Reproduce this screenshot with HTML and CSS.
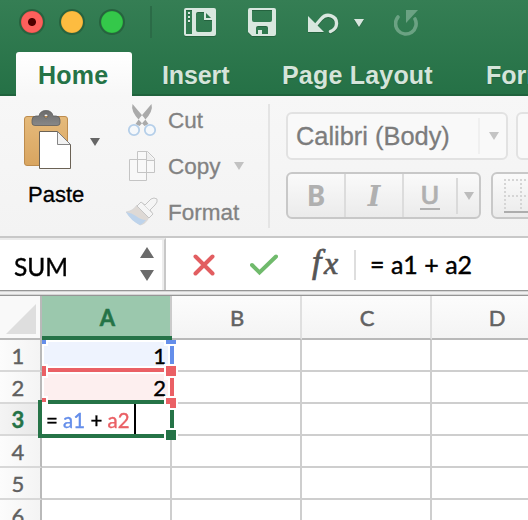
FILE: index.html
```html
<!DOCTYPE html>
<html lang="en">
<head>
<meta charset="utf-8">
<title>Workbook</title>
<link rel="stylesheet" href="styles.css">
</head>
<body>
<div class="app">
  <header class="top">
    <div class="titlebar">
      <i class="light red"></i><i class="light yellow"></i><i class="light green"></i>
      <i class="divider"></i>
      <svg class="tool sidebar" width="34" height="30" viewBox="0 0 34 30"><path fill="#d9e7df" fill-rule="evenodd" d="M3 0H30Q32 0 32 2V26Q32 28 30 28H2Q0 28 0 26V2Q0 0 2 0ZM2 2V26H8V2ZM14 4Q12 4 12 6V22Q12 24 14 24H26Q28 24 28 22V12H20V4Z"/><path fill="#d9e7df" d="M4 4h2v2H4zM4 8h2v2H4zM4 12h2v2H4z"/><path fill="#2f774e" d="M22 5L27 10H22Z"/></svg>
      <svg class="tool save" width="30" height="30" viewBox="0 0 30 30"><path fill="#d9e7df" fill-rule="evenodd" d="M2 0H26Q28 0 28 2V26Q28 28 26 28H4L0 24V2Q0 0 2 0ZM4 2V12Q4 14 6 14H22Q24 14 24 12V2ZM10 18Q8 18 8 20V26H10V22H14V26H20V20Q20 18 18 18Z"/></svg>
      <svg class="tool undo" width="32" height="24" viewBox="0 0 32 24"><path fill="#d9e7df" d="M0 3V19H16Z"/><path d="M7 13L13 6C19 -1 29 3 28.500 11C28.300 15 26 17 22.500 18.500" fill="none" stroke="#d9e7df" stroke-width="3.400" stroke-linecap="round"/></svg>
      <svg class="tool caret" width="10" height="8" viewBox="0 0 10 8"><path fill="#d9e7df" d="M0 0H10L5 8Z"/></svg>
      <svg class="tool redo" width="26" height="28" viewBox="0 0 26 28"><path d="M4 7A10.300 10.300 0 1 0 21 9" fill="none" stroke="#6ba283" stroke-width="3.600" stroke-linecap="round"/><path fill="#6ba283" d="M12 0H24L12 13Z"/></svg>
    </div>
    <nav class="tabs">
      <a class="tab active">Home</a><a class="tab insert">Insert</a><a class="tab layout">Page Layout</a><a class="tab formulas">Formulas</a>
    </nav>
  </header>

  <section class="ribbon">
    <div class="paste">
      <div class="paste-row">
        <svg width="48" height="60" viewBox="0 0 48 60"><defs><linearGradient id="board" x2="0" y2="1"><stop stop-color="#e5ba7b"/><stop offset="1" stop-color="#d9a560"/></linearGradient><linearGradient id="clip" x2="0" y2="1"><stop stop-color="#6b6b6b"/><stop offset="1" stop-color="#888"/></linearGradient></defs><rect x=".5" y="6.500" width="43" height="49" rx="2.500" fill="url(#board)" stroke="#bd8c4e"/><path fill="url(#clip)" stroke="#606060" stroke-width=".8" fill-rule="evenodd" d="M12 6H15Q16 .5 22 .5T29 6H32Q36 6 36 10V13Q36 15.500 33 15.500H11Q8 15.500 8 13V10Q8 6 12 6ZM22 4A2 2 0 1 0 22 8A2 2 0 1 0 22 4Z"/><path fill="#fff" stroke="#6b6255" d="M15.500 21.500H33.500L46.500 34.500V58.500H15.500Z"/><path fill="#f2f2f2" stroke="#777" stroke-width=".9" d="M33.500 21.500V34.500H46.500Z"/></svg>
        <svg class="paste-caret" width="10" height="8" viewBox="0 0 10 8"><path fill="#666" d="M0 0H10L5 8Z"/></svg>
      </div>
      <span class="paste-label">Paste</span>
    </div>
    <div class="clip-actions">
      <div class="action"><svg width="34" height="34" viewBox="0 0 34 34"><path fill="#aaa" d="M6.500 0L18 13.500Q21 18 22.500 20L18.500 22L13 16Q4.500 7 6.500 0ZM25.500 0L14 13.500Q11 18 9.500 20L13.500 22L19 16Q27.500 7 25.500 0Z"/><circle cx="8" cy="26" r="5.200" fill="#f5f8fb" stroke="#b5cfe9" stroke-width="1.800"/><circle cx="24" cy="26" r="5.200" fill="#f5f8fb" stroke="#b5cfe9" stroke-width="1.800"/></svg><span>Cut</span></div>
      <div class="action"><svg width="34" height="34" viewBox="0 0 34 34"><path fill="#f8f8f8" stroke="#c4c4c4" d="M3.500 9.500H20.500V30.500H3.500ZM11.500 1.500H21.500L28.500 8.500V22.500H11.500Z"/><path fill="#eee" stroke="#c4c4c4" d="M20.500 1.500V10.500H28.500"/></svg><span>Copy</span><svg class="copy-caret" width="10" height="8" viewBox="0 0 10 8"><path fill="#c2c2c2" d="M0 0H10L5 8Z"/></svg></div>
      <div class="action"><svg width="34" height="34" viewBox="0 0 34 34"><path fill="#ded9d5" stroke="#d2d2d2" stroke-width=".7" d="M0 16Q7 15 11 9L23 21Q20 28 14 29Q7 25 0 16Z"/><path fill="#bdd3eb" d="M0 16Q6 17 10 20Q15 24 20 24Q17 28 14 29Q5 25 0 16Z"/><path fill="#f5f5f5" stroke="#c5c5c5" d="M11 10L15 6L19 9L25 3Q28 1 31 3Q32 6 29 9L24 14L27 18L23 22Z"/><path fill="none" stroke="#cfcfcf" stroke-width=".8" d="M15 6L27 18"/></svg><span>Format</span></div>
    </div>
    <i class="ribbon-divider"></i>
    <div class="font-tools">
      <div class="control-row">
        <div class="font-name"><span>Calibri (Body)</span><i></i><svg width="10" height="8" viewBox="0 0 10 8"><path fill="#c4c4c4" d="M0 0H10L5 8Z"/></svg></div>
        <div class="font-size"></div>
      </div>
      <div class="control-row second">
        <div class="style-group"><b class="bold">B</b><i class="italic">I</i><span class="under"><span>U</span></span><i class="small-line"></i><svg width="10" height="8" viewBox="0 0 10 8"><path fill="#bcbcbc" d="M0 0H10L5 8Z"/></svg></div>
        <div class="borders"><svg width="38" height="36" viewBox="0 0 38 36"><path d="M0 1H38M0 17H38M1 0V33M17 0V33M33 0V33" stroke="#d5d5d5" stroke-width="2" stroke-dasharray="2 2"/><path d="M0 33H38" stroke="#adadad" stroke-width="2"/></svg></div>
      </div>
    </div>
  </section>

  <section class="formula-bar">
    <div class="name-box"><span class="fit sum">SUM</span><svg width="14" height="34" viewBox="0 0 14 34"><path fill="#6b6b6b" d="M7 0L14 11H0ZM0 23H14L7 34Z"/></svg></div>
    <svg class="cancel" width="22" height="22" viewBox="0 0 22 22"><path d="M2.500 2.500L19.500 19.500M19.500 2.500L2.500 19.500" stroke="#e25e61" stroke-width="4" stroke-linecap="round"/></svg>
    <svg class="accept" width="28" height="22" viewBox="0 0 28 22"><path d="M2 11L9.500 18.500L26 2.500" fill="none" stroke="#70ba6c" stroke-width="4" stroke-linecap="round"/></svg>
    <span class="fx"><span class="f">f</span><span class="x">x</span></span>
    <i class="fx-line"></i>
    <span class="fit formula">= a1 + a2</span>
  </section>
  <div class="splitter"></div>

  <section class="sheet">
    <div class="corner"><svg width="30" height="30" viewBox="0 0 30 30"><path fill="#dedede" d="M30 0V30H0Z"/></svg></div>
    <div class="col selected">A</div><div class="col">B</div><div class="col">C</div><div class="col">D</div>
    <div class="row">1</div><div class="cell blue">1</div><div class="cell"></div><div class="cell"></div><div class="cell"></div>
    <div class="row">2</div><div class="cell pink">2</div><div class="cell"></div><div class="cell"></div><div class="cell"></div>
    <div class="row current">3</div><div class="cell edit"><span class="fit">= <em>a1</em> + <strong>a2</strong></span></div><div class="cell"></div><div class="cell"></div><div class="cell"></div>
    <div class="row">4</div><div class="cell"></div><div class="cell"></div><div class="cell"></div><div class="cell"></div>
    <div class="row">5</div><div class="cell"></div><div class="cell"></div><div class="cell"></div><div class="cell"></div>
    <div class="row">6</div><div class="cell"></div><div class="cell"></div><div class="cell"></div><div class="cell"></div>
    <svg class="selection" width="140" height="104" viewBox="38 336 140 104" shape-rendering="crispEdges">
      <path fill="#fff" d="M42 340H172V342H42ZM42 340H44V404H42ZM42 340H48V346H42ZM164 340H178V346H164ZM168 342H178V368H168ZM42 366H164V374H42ZM42 364H48V378H42ZM164 364H178V380H164ZM42 396H48V404H42ZM164 396H178V410H164ZM168 378H178V400H168ZM164 426H178V440H164Z"/>
      <path fill="#648eea" d="M42 340H46V344H42ZM166 340H176V344H166ZM170 346H174V364H170Z"/>
      <path fill="#ea6065" d="M42 366H46V376H42ZM48 368H164V372H48ZM166 366H176V376H166ZM170 378H174V396H170ZM42 398H46V402H42ZM166 398H176V408H170V404H166Z"/>
      <path fill="#257347" d="M42 336H172V340H42ZM38 400H42V434H164V438H38ZM48 400H164V404H48ZM170 410H174V428H170ZM166 430H176V440H166Z"/>
      <path fill="#000" d="M134 404H136V434H134Z"/>
    </svg>
  </section>
</div>
</body>
</html>
```

FILE: styles.css
```css
* { box-sizing: border-box; }
body { margin: 0; overflow: hidden; font-family: "Liberation Sans", Arial, sans-serif; }
.app { width: 528px; height: 520px; overflow: hidden; background: #fff; }
svg { display: block; flex: none; }

.top { height: 96px; background: linear-gradient(#357e54, #257146); border-bottom: 2px solid #20633d; }
.titlebar { height: 52px; display: flex; align-items: flex-start; padding-left: 19px; }
.light { width: 26px; height: 26px; margin: 9px 14px 0 0; border-radius: 50%; border: 2px solid #27633f; flex: none; }
.red { background: radial-gradient(circle, #4d0000 0 3.500px, #fc605c 4.500px 10px, #e24b47 11px); }
.yellow { background: radial-gradient(circle, #fdbc40 0 10px, #e6a52f 11px); }
.green { background: radial-gradient(circle, #34c84a 0 10px, #27b13a 11px); }
.divider { width: 2px; height: 32px; margin: 6px 32px 0 11px; background: #2b6b47; flex: none; }
.tool { filter: drop-shadow(0 1px 0 #25633f); }
.sidebar { margin-top: 8px; }
.save { margin: 8px 0 0 30px; }
.undo { margin: 13px 0 0 30px; }
.caret { margin: 19px 0 0 14px; }
.redo { margin: 10px 0 0 30px; filter: none; }

.tabs { height: 44px; display: flex; padding-left: 16px; position: relative; }
.tab { height: 44px; line-height: 47px; font-size: 25px; font-weight: bold; color: #d5e4da; white-space: nowrap; flex: none; text-shadow: 0 1px 1px #20643e; }
.active { width: 116px; padding-left: 22px; letter-spacing: 0.200px; color: #257347; background: linear-gradient(#fff, #f7f7f7); border-radius: 3px 3px 0 0; text-shadow: none; }
.insert { width: 120px; padding-left: 30px; letter-spacing: -0.100px; }
.layout { width: 204px; padding-left: 30px; letter-spacing: 0.200px; }
.formulas { padding-left: 30px; }

.ribbon { height: 142px; display: flex; background: linear-gradient(#f7f7f7, #f3f3f3); border-bottom: 2px solid #c8c8c8; overflow: hidden; }
.paste { width: 126px; padding: 14px 0 0 24px; flex: none; }
.paste-row { display: flex; align-items: center; gap: 18px; height: 60px; }
.paste-label { display: block; margin: 12px 0 0 4px; font-size: 22px; line-height: 26px; -webkit-text-stroke: 0.300px #000; }
.paste-caret { margin-top: 4px; }
.clip-actions { width: 142px; padding-top: 7px; flex: none; }
.action { height: 46px; display: flex; align-items: flex-start; color: #828282; font-size: 22.500px; line-height: 36px; -webkit-text-stroke: 0.300px #828282; }
.action svg:first-child { margin: 1px 8px 0 0; }
.action .copy-caret { margin: 13px 0 0 13px; }
.ribbon-divider { width: 2px; height: 124px; margin: 8px 16px 0 0; background: #e4e4e4; flex: none; }
.font-tools { padding-top: 16px; flex: none; }
.control-row { display: flex; gap: 8px; }
.second { margin-top: 12px; }
.font-name { width: 222px; height: 48px; display: flex; align-items: center; border: 2px solid #e2e2e2; border-radius: 6px; background: #f9f9f9; color: #7c7c7c; font-size: 25.400px; padding-left: 8px; -webkit-text-stroke: 0.300px #7c7c7c; }
.font-name span { width: 182px; }
.font-name i { width: 2px; height: 36px; margin-right: 9px; background: #f0f0f0; }
.font-size { width: 60px; height: 48px; border: 2px solid #e2e2e2; border-radius: 6px; background: #f9f9f9; }
.style-group { width: 195px; height: 47px; display: flex; align-items: center; border: 2px solid #c8c8c8; border-radius: 6px; background: linear-gradient(#fafafa, #ebebeb); color: #b0b0b0; }
.style-group .bold, .style-group .italic { width: 58px; height: 43px; line-height: 43px; text-align: center; border-right: 2px solid #dcdcdc; }
.bold { font: bold 28px "Noto Sans", sans-serif; }
.style-group .italic { font: italic bold 27px/46px "DejaVu Serif", serif; }
.under { width: 52px; text-align: center; font: 600 26px/26px "Open Sans", sans-serif; -webkit-text-stroke: 0.500px #b0b0b0; }
.under span { display: block; width: 20px; margin: 0 auto; border-bottom: 2px solid #b0b0b0; height: 28px; line-height: 24px; }
.small-line { width: 2px; height: 36px; margin-right: 6px; background: #dadada; }
.borders { width: 60px; height: 47px; border: 2px solid #c8c8c8; border-radius: 6px; background: linear-gradient(#fafafa, #ebebeb); padding: 5px 0 0 11px; margin-left: 2px; }

.formula-bar { height: 52px; display: flex; align-items: flex-start; background: #fff; font-family: Lato, sans-serif; }
.name-box { width: 166px; height: 52px; display: flex; justify-content: space-between; border-top: 2px solid #ebebeb; border-right: 2px solid #c8c8c8; box-shadow: inset -2px 0 #ededed; padding: 7px 10px 0 14px; flex: none; }
.fit { display: inline-block; white-space: pre; transform-origin: left center; }
.sum { font-size: 25px; line-height: 39px; transform: scaleX(0.980); -webkit-text-stroke: 0.400px #000; }
.cancel { margin: 16px 0 0 27px; }
.accept { margin: 16px 0 0 35px; }
.fx { display: flex; margin: 1px 0 0 34px; width: 42px; font: italic 32px/46px "Liberation Serif", serif; color: #555; -webkit-text-stroke: 0.700px #555; }
.fx .f { font-size: 34px; width: 12px; }
.fx .x { font-size: 32px; line-height: 48px; }
.fx-line { width: 2px; height: 30px; margin: 12px 14px 0 0; background: #dedede; flex: none; }
.formula { font-size: 25px; line-height: 52px; -webkit-text-stroke: 0.400px #000; }
.splitter { height: 6px; background: linear-gradient(#969696 0 1px, #d5d5d5 1px 2px, #f0f0f0 2px 4px, #d5d5d5 4px 5px, #969696 5px); }

.sheet { position: relative; display: grid; grid-template-columns: 42px repeat(4, 130px); grid-template-rows: 44px repeat(6, 32px); width: 562px; font-family: Lato, sans-serif; font-size: 22px; }
.corner { border-right: 2px solid #b9b9b9; border-bottom: 2px solid #b9b9b9; background: #f9f9f9; padding: 8px 0 0 6px; }
.col { padding: 0 0 0 2px; line-height: 44px; text-align: center; color: #626262; border-right: 2px solid #dfdfdf; border-bottom: 2px solid #b9b9b9; background: linear-gradient(#fcfcfc, #f4f4f4); -webkit-text-stroke: 0.500px currentColor; }
.selected { background: #9bc8ad; border-right-color: #cacaca; color: #257347; font-weight: bold; padding-left: 3px; }
.row { padding-right: 4px; line-height: 31px; text-align: center; color: #606060; background: linear-gradient(90deg, #fcfcfc, #f4f4f4); border-right: 2px solid #b9b9b9; border-bottom: 2px solid #d8d8d8; -webkit-text-stroke: 0.400px currentColor; }
.current { color: #257347; font-weight: bold; background: linear-gradient(90deg, #f4f4f4, #e8e8e8); }
.cell { border-right: 2px solid #cecece; border-bottom: 2px solid #cecece; text-align: right; line-height: 31px; padding-right: 4px; -webkit-text-stroke: 0.400px currentColor; }
.blue { background: #eef3fe; }
.pink { background: #fdefef; }
.edit { padding-left: 4px; text-align: left; }
.edit .fit { transform: scaleX(0.930); }
.edit em { font-style: normal; color: #648eea; }
.edit strong { font-weight: normal; color: #ea6065; }
.selection { position: absolute; left: 38px; top: 40px; }
```
